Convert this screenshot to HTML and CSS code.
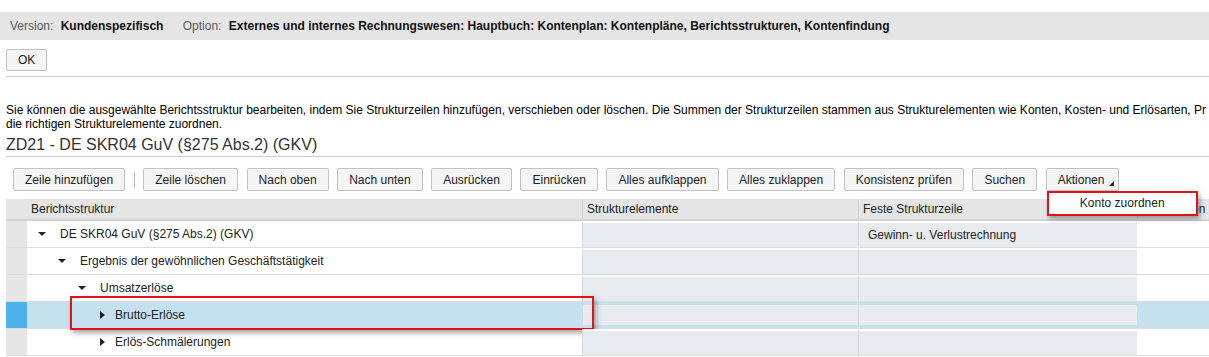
FILE: index.html
```html
<!DOCTYPE html>
<html lang="de">
  <head>
    <meta charset="UTF-8" />
    <title>Berichtsstruktur bearbeiten</title>
    <link rel="stylesheet" href="styles.css">
  </head>
  <body>
    <div class="info-bar">
      <span class="info-label">Version:</span>
      <span class="info-value">Kundenspezifisch</span>
      <span class="info-label">Option:</span>
      <span class="info-value">Externes und internes Rechnungswesen: Hauptbuch: Kontenplan: Kontenpläne, Berichtsstrukturen, Kontenfindung</span>
    </div>

    <div class="content">
      <div class="ok-row">
        <button class="btn">OK</button>
      </div>

      <p class="description">
        <span>Sie können die ausgewählte Berichtsstruktur bearbeiten, indem Sie Strukturzeilen hinzufügen, verschieben oder löschen. Die Summen der Strukturzeilen stammen aus Strukturelementen wie Konten, Kosten- und Erlösarten, Pr</span>
        <span>die richtigen Strukturelemente zuordnen.</span>
      </p>

      <h1 class="title">ZD21 - DE SKR04 GuV (§275 Abs.2) (GKV)</h1>

      <div class="toolbar">
        <button class="btn">Zeile hinzufügen</button>
        <span class="toolbar-sep"></span>
        <button class="btn">Zeile löschen</button>
        <button class="btn">Nach oben</button>
        <button class="btn">Nach unten</button>
        <button class="btn">Ausrücken</button>
        <button class="btn">Einrücken</button>
        <button class="btn">Alles aufklappen</button>
        <button class="btn">Alles zuklappen</button>
        <button class="btn">Konsistenz prüfen</button>
        <button class="btn">Suchen</button>
        <div class="menu-wrap">
          <button class="btn btn-menu">Aktionen</button>
          <div class="menu">
            <div class="menu-item">Konto zuordnen</div>
          </div>
        </div>
      </div>

      <div class="tree-table">
        <div class="tt-row tt-head">
          <div class="tt-sel"></div>
          <div class="tt-cell">Berichtsstruktur</div>
          <div class="tt-cell">Strukturelemente</div>
          <div class="tt-cell">Feste Strukturzeile</div>
          <div class="tt-cell">Kennzahlen D</div>
        </div>

        <div class="tt-row">
          <div class="tt-sel"></div>
          <div class="tt-cell tt-name level-0"><span class="arrow open"></span>DE SKR04 GuV (§275 Abs.2) (GKV)</div>
          <div class="tt-cell tt-field"></div>
          <div class="tt-cell tt-field">Gewinn- u. Verlustrechnung</div>
          <div class="tt-cell"></div>
        </div>

        <div class="tt-row">
          <div class="tt-sel"></div>
          <div class="tt-cell tt-name level-1"><span class="arrow open"></span>Ergebnis der gewöhnlichen Geschäftstätigkeit</div>
          <div class="tt-cell tt-field"></div>
          <div class="tt-cell tt-field"></div>
          <div class="tt-cell"></div>
        </div>

        <div class="tt-row">
          <div class="tt-sel"></div>
          <div class="tt-cell tt-name level-2"><span class="arrow open"></span>Umsatzerlöse</div>
          <div class="tt-cell tt-field"></div>
          <div class="tt-cell tt-field"></div>
          <div class="tt-cell"></div>
        </div>

        <div class="tt-row selected">
          <div class="tt-sel"></div>
          <div class="tt-cell tt-name level-3"><span class="arrow closed"></span>Brutto-Erlöse</div>
          <div class="tt-cell tt-field"></div>
          <div class="tt-cell tt-field"></div>
          <div class="tt-cell"></div>
          <div class="highlight"></div>
        </div>

        <div class="tt-row">
          <div class="tt-sel"></div>
          <div class="tt-cell tt-name level-3"><span class="arrow closed"></span>Erlös-Schmälerungen</div>
          <div class="tt-cell tt-field"></div>
          <div class="tt-cell tt-field"></div>
          <div class="tt-cell"></div>
        </div>
      </div>
    </div>
  </body>
</html>
```

FILE: styles.css
```css
body {
  margin: 0;
  font-family: "Liberation Sans", Arial, sans-serif;
  font-size: 12px;
  color: #000;
  background-color: white;
  overflow: hidden;
  width: 1209px;
  height: 357px;
}
.info-bar {
  margin-top: 12px;
  height: 28px;
  line-height: 28px;
  padding-left: 10px;
  background-color: #e5e5e5;
  white-space: nowrap;
  overflow: hidden;
}
.info-label {
  color: #5a5a5a;
  margin-right: 4px;
}
.info-value {
  font-weight: bold;
  color: #111;
  margin-right: 16px;
}
.content {
  padding-left: 6px;
}
.ok-row {
  padding-top: 9px;
  padding-bottom: 5px;
  border-bottom: 1px solid #cfcfcf;
}
.btn {
  font-family: "Liberation Sans", Arial, sans-serif;
  font-size: 12px;
  color: #222;
  height: 22px;
  padding: 0 11px;
  background-color: #f5f5f5;
  border: 1px solid #c2c2c2;
  border-radius: 2px;
  cursor: pointer;
  flex: none;
}
.description {
  margin: 26px 0 0;
  line-height: 14px;
  white-space: nowrap;
  overflow: hidden;
}
.description span {
  display: block;
}
.title {
  margin: 5px 0 0;
  font-size: 16px;
  font-weight: normal;
  color: #333;
  line-height: 18px;
  padding-bottom: 2px;
  border-bottom: 1px solid #cfcfcf;
}
.toolbar {
  display: flex;
  align-items: center;
  gap: 8.6px;
  margin-top: 11px;
  padding-left: 7px;
}
.toolbar .btn {
  height: 23px;
}
.toolbar-sep {
  width: 1px;
  height: 16px;
  background-color: #b5b5b5;
}
.menu-wrap {
  position: relative;
}
.btn-menu {
  position: relative;
  padding-right: 14px;
}
.btn-menu::after {
  content: "";
  position: absolute;
  right: 4px;
  bottom: 4px;
  border-style: solid;
  border-width: 0 0 5px 5px;
  border-color: transparent transparent #222 transparent;
}
.menu {
  position: absolute;
  top: 23px;
  left: 1px;
  width: 147px;
  height: 21px;
  background-color: white;
  border: 2px solid #e2121b;
  box-shadow: 2px 3px 5px rgba(0, 0, 0, 0.35);
  z-index: 5;
}
.menu-item {
  line-height: 21px;
  text-align: center;
  color: #222;
  white-space: nowrap;
}
.tree-table {
  margin-top: 8px;
}
.tt-row {
  position: relative;
  display: grid;
  grid-template-columns: 21px 555px 276px 279px 200px;
  height: 27px;
  border-bottom: 1px solid #dcdcdc;
  box-sizing: border-box;
}
.tt-head {
  height: 22px;
  background-color: #e5e5e5;
  border-bottom: 2px solid #d2d2d2;
  color: #333;
}
.tt-head .tt-cell {
  line-height: 20px;
  padding-left: 4px;
}
.tt-head .tt-cell + .tt-cell {
  border-left: 1px solid #d0d0d0;
}
.tt-sel {
  background-color: #e6e6e6;
}
.tt-cell {
  white-space: nowrap;
  overflow: hidden;
  line-height: 26px;
  color: #222;
}
.tt-name {
  display: flex;
  align-items: center;
}
.level-0 { padding-left: 10px; }
.level-1 { padding-left: 30px; }
.level-2 { padding-left: 50px; }
.level-3 { padding-left: 70px; }
.arrow {
  display: inline-block;
  position: relative;
  width: 23px;
  height: 8px;
}
.arrow.open::before {
  content: "";
  position: absolute;
  left: 1px;
  top: 2px;
  border-style: solid;
  border-width: 4px 4px 0 4px;
  border-color: #222 transparent transparent transparent;
}
.arrow.closed {
  width: 18px;
}
.arrow.closed::before {
  content: "";
  position: absolute;
  left: 3px;
  top: 0;
  border-style: solid;
  border-width: 4px 0 4px 5px;
  border-color: transparent transparent transparent #222;
}
.tt-field {
  background-color: #e8ebee;
  border-top: 2px solid #fff;
  border-left: 1px solid #d6d9dc;
  line-height: 24px;
  padding-left: 9px;
}
.tt-row.selected {
  background-color: #c6e1ee;
}
.tt-row.selected .tt-sel {
  background-color: #4cb3eb;
}
.tt-row.selected .tt-field {
  border-top: 3px solid #c6e1ee;
  border-bottom: 3px solid #c6e1ee;
}
.highlight {
  position: absolute;
  left: 64px;
  top: -6px;
  width: 520px;
  height: 30px;
  border: 2px solid #e2121b;
  box-shadow: 2px 3px 5px rgba(0, 0, 0, 0.35);
  pointer-events: none;
}
```
